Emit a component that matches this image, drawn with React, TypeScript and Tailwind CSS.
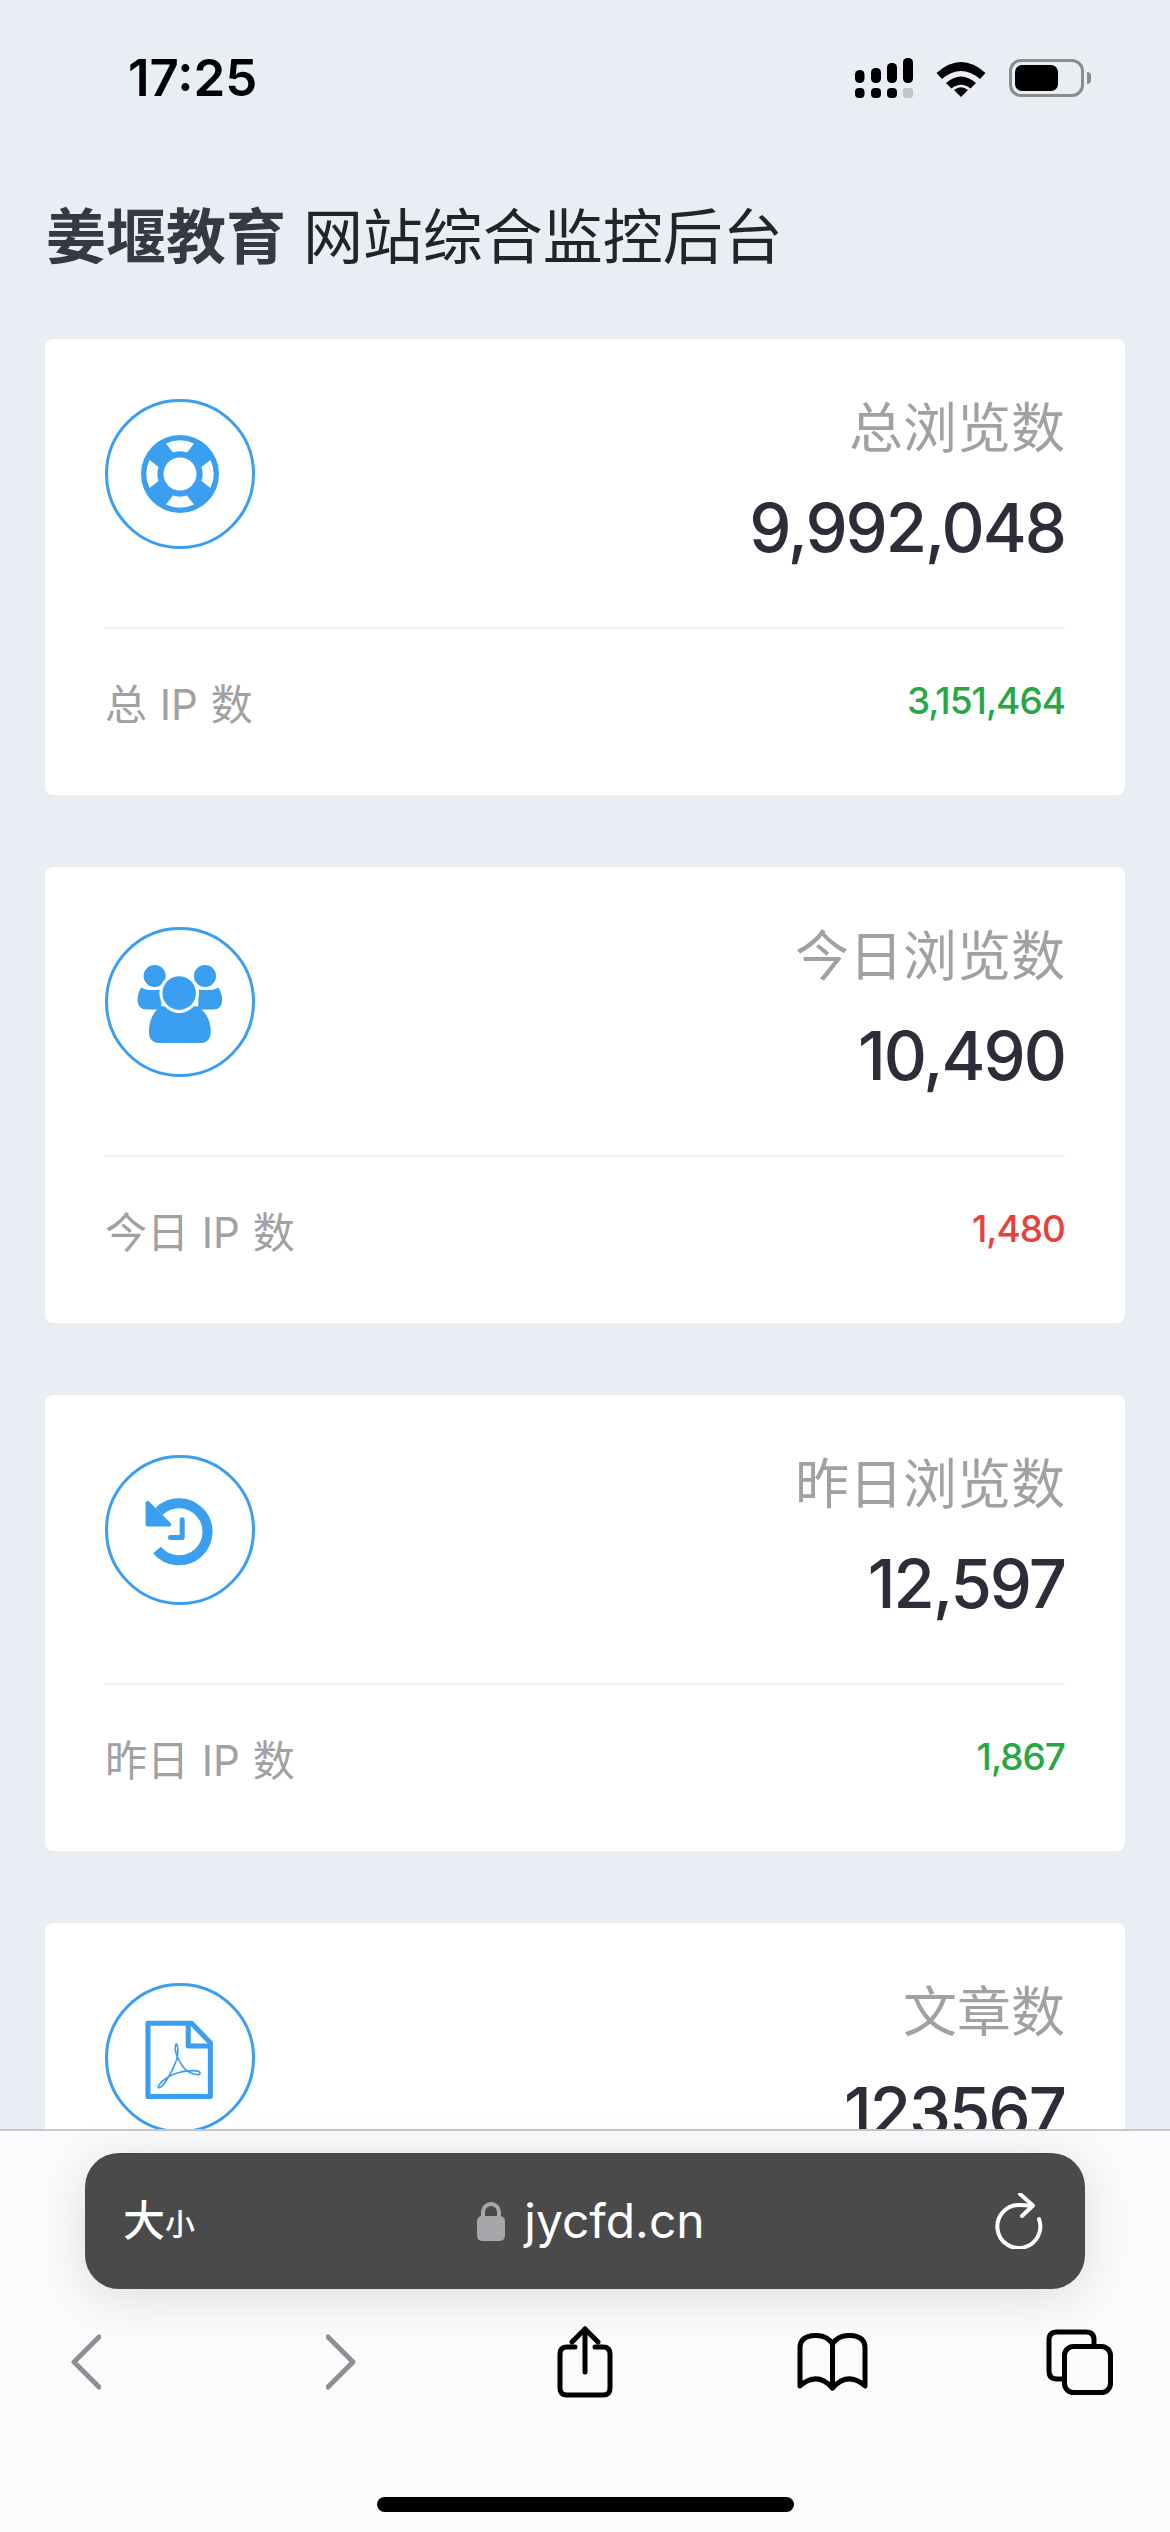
import React from 'react';

const stats = [
	{ title: '总浏览数', value: '9,992,048', label: '总 IP 数', sub: '3,151,464', subColor: 'text-[#28a745]', icon: 'ring' },
	{ title: '今日浏览数', value: '10,490', label: '今日 IP 数', sub: '1,480', subColor: 'text-[#e8413c]', icon: 'users' },
	{ title: '昨日浏览数', value: '12,597', label: '昨日 IP 数', sub: '1,867', subColor: 'text-[#28a745]', icon: 'history' },
	{ title: '文章数', value: '123567', label: '总 IP 数', sub: '0', subColor: 'text-[#28a745]', icon: 'pdf' },
];

const BLUE = '#3a9ff0';

function RingIcon() {
	const segment = 'M-14 -30.5 A33.5 33.5 0 0 1 14 -30.5 L7 -21.5 A22.5 22.5 0 0 0 -7 -21.5 Z';
	return (
		<svg width="78" height="78" viewBox="-39 -37 78 78" fill="none">
			<circle r="39" cy="2" fill={BLUE} />
			<g transform="translate(0 2)">
				{[0, 90, 180, 270].map((a) => (
					<path key={a} d={segment} fill="white" transform={`rotate(${a})`} />
				))}
				<circle r="16.5" fill="white" />
			</g>
		</svg>
	);
}

function UsersIcon() {
	return (
		<svg className="absolute -inset-[3px]" viewBox="77 82 447 447" fill="none">
			<path d="M185 262 Q205 274 245 268 L245 328 L202 328 Q174 328 174 300 Q174 278 185 262 Z" fill={BLUE} />
			<path d="M415 262 Q395 274 355 268 L355 328 L398 328 Q426 328 426 300 Q426 278 415 262 Z" fill={BLUE} />
			<circle cx="225" cy="228" r="35" fill={BLUE} stroke="white" strokeWidth="4" />
			<circle cx="375" cy="228" r="35" fill={BLUE} stroke="white" strokeWidth="4" />
			<path d="M243 318 L353 318 Q392 345 392 395 Q392 428 358 428 L242 428 Q208 428 208 395 Q208 345 243 318 Z" fill={BLUE} />
			<circle cx="298" cy="279" r="59" fill="white" />
			<circle cx="298" cy="279" r="50" fill={BLUE} />
		</svg>
	);
}

function HistoryIcon() {
	return (
		<svg className="absolute -inset-[3px]" viewBox="77 77 447 447" fill="none">
			<path d="M238 245 A85 85 0 1 1 232 360" stroke={BLUE} strokeWidth="30" />
			<path d="M204 220 L268 284 L204 284 Z" fill={BLUE} stroke={BLUE} strokeWidth="12" strokeLinejoin="round" />
			<path d="M307 270 L307 323 L272 323" stroke={BLUE} strokeWidth="15" strokeLinecap="round" strokeLinejoin="round" />
		</svg>
	);
}

function PdfIcon() {
	return (
		<svg className="absolute -inset-[3px]" viewBox="77 70 447 447" fill="none">
			<path d="M205 190 L335 190 L391 248 L391 408 L205 408 Z" stroke={BLUE} strokeWidth="15" strokeLinejoin="round" />
			<path d="M325 190 L325 258 L391 258" stroke={BLUE} strokeWidth="15" strokeLinejoin="round" />
			<path
				d="M289 252 C280 270 295 300 310 320 C325 340 362 350 360 338 C358 326 300 330 265 350 C245 362 230 382 238 382 C248 384 275 340 290 300 C296 280 295 255 289 252 Z"
				stroke={BLUE}
				strokeWidth="5"
			/>
		</svg>
	);
}

function StatIcon({ name }: { name: string }) {
	return (
		<div className="relative flex h-[150px] w-[150px] shrink-0 items-center justify-center rounded-full border-[3px] border-[#3a9ff0]">
			{name === 'ring' && <RingIcon />}
			{name === 'users' && <UsersIcon />}
			{name === 'history' && <HistoryIcon />}
			{name === 'pdf' && <PdfIcon />}
		</div>
	);
}

function StatCard({ stat }: { stat: (typeof stats)[number] }) {
	return (
		<div className="h-[456px] shrink-0 rounded-lg bg-white px-[60px]">
			<div className="flex h-[290px] items-start justify-between border-b-2 border-[#f0f2f5] pt-[60px]">
				<StatIcon name={stat.icon} />
				<div className="flex flex-col items-end">
					<div className="text-[54px] leading-[60px] text-[#a1a1a1]">{stat.title}</div>
					<div className="mt-[29px] text-[67px] font-medium leading-[80px] tracking-[-2px] text-[#2d2d3a]">{stat.value}</div>
				</div>
			</div>
			<div className="flex h-[166px] items-center justify-between pb-[14px]">
				<div className="text-[42px] leading-[50px] text-[#a1a1a1] [word-spacing:1px]">{stat.label}</div>
				<div className={`mb-[8px] text-[37px] font-medium leading-[44px] tracking-[-1px] ${stat.subColor}`}>{stat.sub}</div>
			</div>
		</div>
	);
}

function StatusIcons() {
	return (
		<div className="flex items-center">
			<svg width="58" height="40" viewBox="856 57 58 40" fill="black">
				<rect x="856" y="69" width="9.5" height="13" rx="4.5" />
				<rect x="872" y="67" width="10" height="15" rx="4.5" />
				<rect x="888" y="62" width="10" height="20" rx="4.5" />
				<rect x="904" y="57" width="10" height="25" rx="4.5" />
				<rect x="856" y="87" width="9.5" height="10" rx="4" />
				<rect x="872" y="87" width="10" height="10" rx="4" />
				<rect x="888" y="87" width="10" height="10" rx="4" />
				<rect x="904" y="87" width="10" height="10" rx="3" fill="#c2c3c6" />
			</svg>
			<svg className="ml-[23px]" width="50" height="37" viewBox="0 0 50 37" fill="black">
				<path d="M0.5 13 Q25 -9 49.5 13 L44 19 Q25 3 6 19 Z" />
				<path d="M10 23 Q25 10 40 23 L34.5 28.5 Q25 21 15.5 28.5 Z" />
				<path d="M18 30 Q25 24.5 32 30 L25 37 Z" />
			</svg>
			<div className="ml-[23px] flex items-center">
				<div className="h-[38px] w-[75px] rounded-[12px] border-[3.5px] border-[#8a8c90] p-[3px]">
					<div className="h-full w-[43px] rounded-[7px] bg-black" />
				</div>
				<div className="ml-[3px] h-[12px] w-[4px] rounded-r-full bg-[#8a8c90]" />
			</div>
		</div>
	);
}

function SafariBar() {
	return (
		<div className="absolute inset-x-0 bottom-0 h-[403px] border-t-2 border-[#c6c7c9] bg-[#fafbfc]">
			<div className="mx-[85px] mt-[22px] flex h-[136px] items-center rounded-[34px] bg-[#4a4a4a] pl-[38px] pr-[42px] text-white shadow-[0_8px_50px_rgba(0,0,0,0.12)]">
				<div className="flex w-[76px] items-end font-medium">
					<span className="text-[42px] leading-[48px]">大</span>
					<span className="text-[30px] leading-[42px]">小</span>
				</div>
				<div className="flex flex-1 items-center justify-center pr-[12px]">
					<svg width="28" height="40" viewBox="0 0 28 40" fill="none">
						<path d="M6 17 V11 A8 8 0 0 1 22 11 V17" stroke="#a6a6ab" strokeWidth="4" />
						<rect y="15" width="28" height="25" rx="5" fill="#a6a6ab" />
					</svg>
					<span className="ml-[19px] text-[48px] leading-[60px]">jycfd.cn</span>
				</div>
				<svg width="48" height="56" viewBox="0 0 48 56" fill="none" stroke="white" strokeWidth="4" strokeLinecap="round" strokeLinejoin="round">
					<path d="M36 13 Q30 12 24 12 A21.5 21.5 0 1 0 44 26" />
					<path d="M25 1 L38 12.5 L27 23" />
				</svg>
			</div>
			<div className="flex h-[146px] items-center pl-[71px]">
				<svg width="30" height="56" viewBox="0 0 30 56" fill="none" stroke="#8e8e93" strokeWidth="5" strokeLinecap="round" strokeLinejoin="round">
					<path d="M28 3 L3 28 L28 53" />
				</svg>
				<svg className="ml-[225px]" width="30" height="56" viewBox="0 0 30 56" fill="none" stroke="#8e8e93" strokeWidth="5" strokeLinecap="round" strokeLinejoin="round">
					<path d="M2 3 L27 28 L2 53" />
				</svg>
				<svg className="ml-[201px]" width="56" height="72" viewBox="0 0 56 72" fill="none" stroke="black" strokeWidth="5" strokeLinecap="round" strokeLinejoin="round">
					<path d="M18 21 H10 Q3 21 3 28 V62 Q3 69 10 69 H46 Q53 69 53 62 V28 Q53 21 46 21 H38" />
					<path d="M28 46 V3" />
					<path d="M15 16 L28 3 L41 16" />
				</svg>
				<svg className="ml-[184px]" width="71" height="58" viewBox="0 0 71 58" fill="none" stroke="black" strokeWidth="5" strokeLinecap="round" strokeLinejoin="round">
					<path d="M35.5 11 Q30 2 18 2.5 Q3 3 3 15 V53 Q20 38 35.5 55 Q51 38 68 53 V15 Q68 3 53 2.5 Q41 2 35.5 11 Z" />
					<path d="M35.5 11 V55" />
				</svg>
				<svg className="ml-[178px]" width="67" height="66" viewBox="0 0 67 66" fill="none" stroke="black" strokeWidth="5" strokeLinejoin="round">
					<path d="M16 50 H11 Q3 50 3 42 V11 Q3 3 11 3 H40 Q48 3 48 11 V16" />
					<rect x="18.5" y="17.5" width="46" height="46" rx="9" />
				</svg>
			</div>
			<div className="ml-[377px] mt-[62px] h-[15px] w-[417px] rounded-full bg-black" />
		</div>
	);
}

export default function App() {
	return (
		<div
			className="relative flex h-[2532px] w-[1170px] flex-col overflow-hidden bg-[#e9edf4]"
			style={{ fontFamily: 'Inter, "Noto Sans CJK SC", sans-serif' }}
		>
			<div className="flex h-[156px] shrink-0 items-center justify-between pl-[128px] pr-[79px]">
				<div className="text-[51px] font-semibold text-black">17:25</div>
				<StatusIcons />
			</div>
			<div className="mb-[62px] ml-[46px] mt-[41px] h-[80px] shrink-0 text-[60px] leading-[80px] text-[#212529]">
				<span className="font-bold text-[#343a40]">姜堰教育</span> 网站综合监控后台
			</div>
			<div className="flex flex-col gap-[72px] px-[45px]">
				{stats.map((stat) => (
					<StatCard key={stat.title} stat={stat} />
				))}
			</div>
			<SafariBar />
		</div>
	);
}
